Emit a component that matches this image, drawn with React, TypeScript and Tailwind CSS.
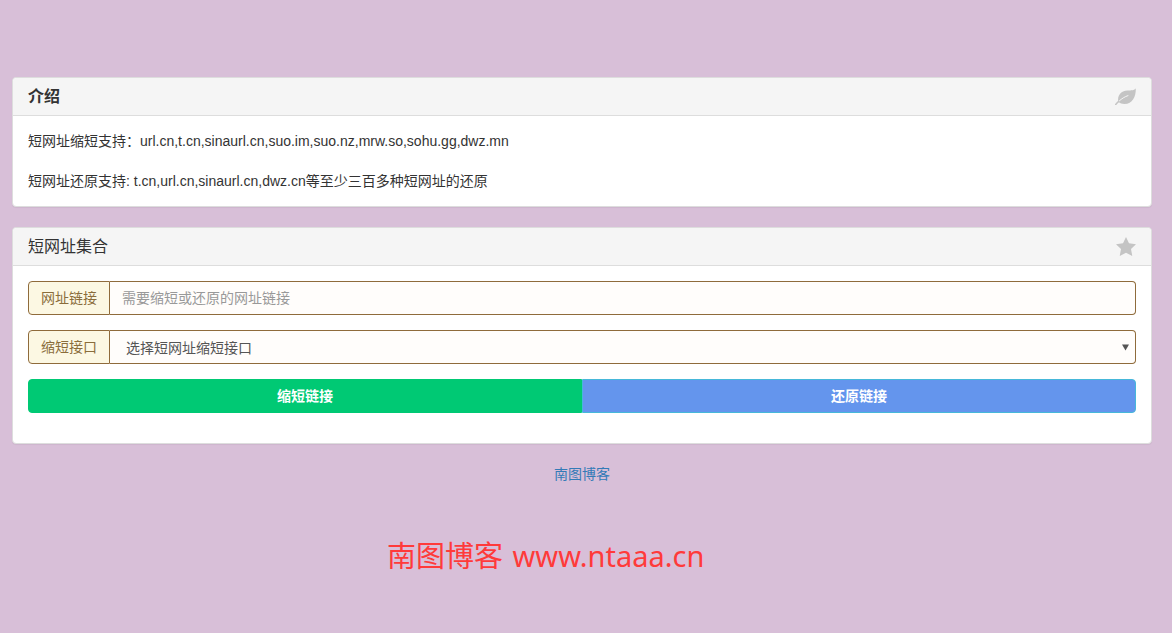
import React from "react";

const font = "font-['Liberation_Sans','Noto_Sans_CJK_SC',sans-serif]";

const LeafIcon = () => (
  <svg width="21" height="17" viewBox="0 0 21 17" className="shrink-0">
    <path
      d="M20.8 0.3C21 9 17.5 16 9.5 16C7 16 5 15.3 3.5 14C1.8 8 6 2.8 12.5 2.6C16 2.5 19.5 2.5 20.8 0.3Z"
      fill="#c4c4c4"
    />
    <path d="M0.8 16.4C1.8 15 3 13.8 4.4 12.8" stroke="#c4c4c4" strokeWidth="1.6" fill="none" strokeLinecap="round" />
    <path d="M4.4 12.8C6.8 10.6 9.6 8.8 13 7.6" stroke="#f5f5f5" strokeWidth="1" fill="none" strokeLinecap="round" />
  </svg>
);

const StarIcon = () => (
  <svg width="20" height="19" viewBox="0 0 20 19" className="shrink-0">
    <polygon
      points="10,0 13,6.3 20,7.2 15,12 16.3,19 10,15.7 3.7,19 5,12 0,7.2 7,6.3"
      fill="#c4c4c4"
    />
  </svg>
);

const App: React.FC = () => {
  return (
    <div className={`min-h-[633px] bg-[#d8bfd8] pt-[77px] pr-5 pl-3 text-[14px] leading-5 text-[#333] ${font}`}>
      {/* intro panel */}
      <section className="mb-5 rounded border border-[#ddd] bg-white shadow-[0_1px_1px_rgba(0,0,0,0.05)]">
        <div className="flex h-[38px] items-center justify-between rounded-t border-b border-[#ddd] bg-[#f5f5f5] px-[15px]">
          <h3 className="text-[16px] font-bold text-[#333]">介绍</h3>
          <LeafIcon />
        </div>
        <div className="p-[15px]">
          <p>短网址缩短支持：url.cn,t.cn,sinaurl.cn,suo.im,suo.nz,mrw.so,sohu.gg,dwz.mn</p>
          <p className="mt-5">短网址还原支持: t.cn,url.cn,sinaurl.cn,dwz.cn等至少三百多种短网址的还原</p>
        </div>
      </section>

      {/* form panel */}
      <section className="mb-5 rounded border border-[#ddd] bg-white shadow-[0_1px_1px_rgba(0,0,0,0.05)]">
        <div className="flex h-[38px] items-center justify-between rounded-t border-b border-[#ddd] bg-[#f5f5f5] px-[15px]">
          <h3 className="text-[16px] font-normal text-[#333]">短网址集合</h3>
          <StarIcon />
        </div>
        <div className="p-[15px]">
          <div className="mb-[15px] flex h-[34px]">
            <span className="flex w-[82px] items-center justify-center rounded-l border border-[#8f6b3b] bg-[#fcf8e3] text-[#8a6d3b]">
              网址链接
            </span>
            <input
              className="min-w-0 flex-1 rounded-r border border-l-0 border-[#8f6b3b] bg-[#fffdfb] px-3 text-[14px] text-[#555] outline-none placeholder:text-[#999]"
              placeholder="需要缩短或还原的网址链接"
            />
          </div>
          <div className="mb-[15px] flex h-[34px]">
            <span className="flex w-[82px] items-center justify-center rounded-l border border-[#8f6b3b] bg-[#fcf8e3] text-[#8a6d3b]">
              缩短接口
            </span>
            <div className="relative min-w-0 flex-1">
              <select className="h-full w-full appearance-none rounded-r border border-l-0 border-[#8f6b3b] bg-[#fffdfb] pt-[2px] pl-4 text-[14px] text-[#555] outline-none">
                <option>选择短网址缩短接口</option>
              </select>
              <svg className="pointer-events-none absolute top-[14px] right-[7px]" width="7" height="7" viewBox="0 0 7 7">
                <path d="M0 0.5h7L3.5 6.5z" fill="#555" />
              </svg>
            </div>
          </div>
          <div className="mb-[15px] flex h-[34px]">
            <button className="flex-1 rounded-l border border-[#00c974] bg-[#00c974] font-bold text-white">缩短链接</button>
            <button className="flex-1 rounded-r border border-[#46b8da] bg-[#6495ed] font-bold text-white">还原链接</button>
          </div>
        </div>
      </section>

      <div className="text-center">
        <a href="#" className="text-[#337ab7]">南图博客</a>
      </div>

      <div className="mt-[52px] pl-[375px] font-['Noto_Sans','Noto_Sans_CJK_SC',sans-serif] text-[29px] leading-10 [word-spacing:2px] text-[#ff3a3a]">
        南图博客 www.ntaaa.cn
      </div>
    </div>
  );
};

export default App;
